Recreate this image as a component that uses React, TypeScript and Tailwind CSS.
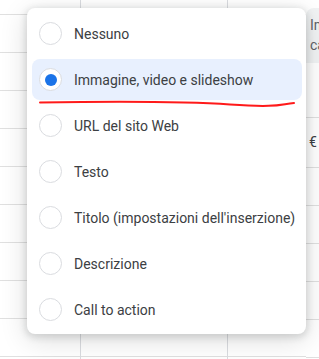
import React from "react";

const items = [
  "Nessuno",
  "Immagine, video e slideshow",
  "URL del sito Web",
  "Testo",
  "Titolo (impostazioni dell'inserzione)",
  "Descrizione",
  "Call to action",
];

function LeftCol({ w, border }: { w: string; border?: boolean }) {
  const rows = [0, 1, 2, 3, 4, 5, 6, 7, 8];
  return (
    <div className={`${w} flex flex-col ${border ? "border-r border-[#dadce0]" : ""}`}>
      <div className="h-[15px] shrink-0 border-b border-[#e0e0e0]" />
      {rows.map((r) => (
        <div key={r} className="h-[38px] shrink-0 border-b border-[#e0e0e0]" />
      ))}
    </div>
  );
}

export default function App() {
  return (
    <div
      className="relative w-[319px] h-[359px] overflow-hidden bg-white"
      style={{ fontFamily: "Roboto, 'Liberation Sans', sans-serif" }}
    >
      <div className="flex h-full">
        <LeftCol w="w-[81px]" border />
        <LeftCol w="w-[147px]" border />
        <LeftCol w="w-[78px]" />
        <div className="w-[13px] flex flex-col">
          <div className="h-[8px] shrink-0" />
          <div className="h-[55px] shrink-0 rounded-tl-lg bg-[#f1f3f4] pl-[4px] pt-[7px] text-[14px] leading-[20px] text-[#5f6368] overflow-hidden whitespace-nowrap">
            <div>Immagine</div>
            <div>carosello</div>
          </div>
          <div className="h-[55px] shrink-0 border-b border-[#e0e0e0]" />
          <div className="h-[50px] shrink-0 border-b border-[#e0e0e0] pl-[3px] pt-[14px] text-[14px] leading-[20px] text-[#3c4043] overflow-hidden whitespace-nowrap">
            €
          </div>
          {[0, 1, 2, 3, 4].map((r) => (
            <div key={r} className="h-[38px] shrink-0 border-b border-[#e0e0e0]" />
          ))}
        </div>
      </div>

      <div className="absolute left-[27px] top-[8px] w-[279px] h-[326px] rounded-lg bg-white pt-[2px] pb-[2px] shadow-[0_2px_6px_2px_rgba(60,64,67,0.15),0_6px_28px_rgba(0,0,0,0.14)]">
        {items.map((label, i) => {
          const sel = i === 1;
          return (
            <div key={label} className="h-[46px] pt-[3px] pb-[2px] pl-[5px] pr-[4px]">
              <div
                className={`h-full flex items-center rounded-lg pl-[7px] ${sel ? "bg-[#e8f0fe]" : ""}`}
              >
                <div className="w-[23px] h-[23px] shrink-0 rounded-full border border-[#dadce0] bg-white flex items-center justify-center">
                  {sel && <div className="w-[12px] h-[12px] rounded-full bg-[#1a73e8]" />}
                </div>
                <span className="ml-[12px] text-[14px] leading-[20px] text-[#3c4043] whitespace-nowrap">
                  {label}
                </span>
              </div>
            </div>
          );
        })}
      </div>

      <svg className="absolute left-0 top-0 pointer-events-none" width="319" height="359">
        <path
          d="M40 102.5 C 110 101.5, 180 101, 230 104.5 S 280 104, 294 103"
          stroke="#ff1a1a"
          strokeWidth="2"
          fill="none"
          strokeLinecap="round"
        />
      </svg>
    </div>
  );
}
